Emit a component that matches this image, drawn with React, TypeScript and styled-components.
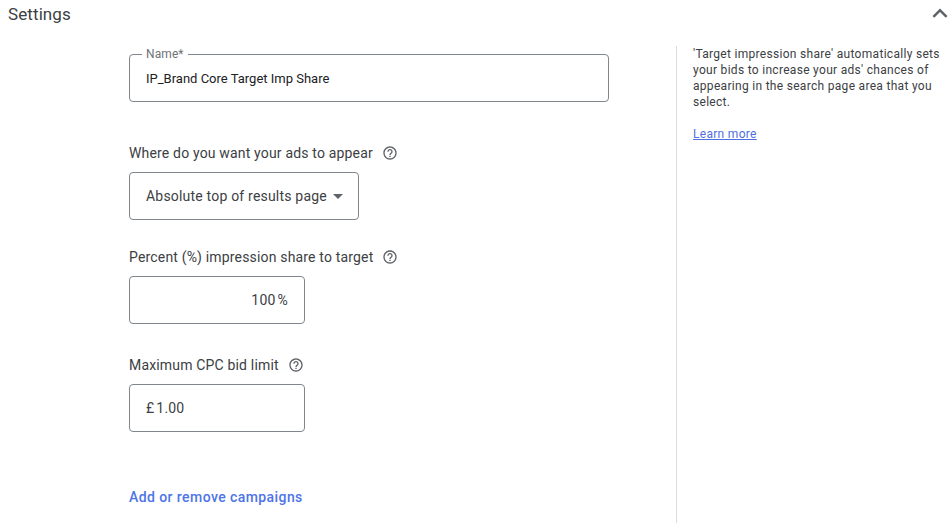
import styled, { createGlobalStyle } from 'styled-components';

const GlobalStyle = createGlobalStyle`
  html, body {
    margin: 0;
    padding: 0;
    background: #fff;
    font-family: Roboto, "Liberation Sans", sans-serif;
  }
`;

const Page = styled.div`
  width: 952px;
  height: 523px;
  overflow: hidden;
  display: flex;
  flex-direction: column;
  color: #3c4043;
`;

const Header = styled.div`
  height: 28px;
  display: flex;
  align-items: center;
  justify-content: space-between;
  padding: 0 2px 0 8px;
  flex-shrink: 0;
`;

const Title = styled.div`
  font-size: 17px;
  letter-spacing: 0.1px;
  color: #3c4043;
`;

const Body = styled.div`
  flex: 1;
  display: flex;
  padding-top: 18px;
`;

const FormColumn = styled.div`
  width: 547px;
  margin-left: 129px;
  flex-shrink: 0;
  display: flex;
  flex-direction: column;
`;

const Side = styled.div`
  flex: 1;
  border-left: 1px solid #dadce0;
  padding-left: 16px;
  padding-right: 8px;
  font-size: 12px;
  line-height: 16px;
  letter-spacing: 0.3px;
  color: #3c4043;
`;

const SideLink = styled.a`
  display: inline-block;
  margin-top: 16px;
  color: #4f6fe0;
  text-decoration: underline;
`;

const NameField = styled.fieldset`
  width: 480px;
  height: 55px;
  margin: 1px 0 0;
  padding: 0 16px;
  box-sizing: border-box;
  border: 1px solid #80868b;
  border-radius: 4px;
`;

const NameLegend = styled.legend`
  margin-left: -4px;
  padding: 0 4px;
  font-size: 12px;
  line-height: 14px;
  letter-spacing: 0.1px;
  color: #6f7378;
`;

const NameValue = styled.div`
  font-size: 13px;
  line-height: 16px;
  margin-top: 10px;
  color: #202124;
`;

const LabelRow = styled.div<{ $top: number }>`
  margin-top: ${(p) => p.$top}px;
  height: 20px;
  display: flex;
  align-items: center;
  gap: 9px;
  font-size: 14px;
  letter-spacing: 0.17px;
  color: #3c4043;
`;

const Box = styled.div<{ $width: number; $end?: boolean }>`
  width: ${(p) => p.$width}px;
  height: 48px;
  margin-top: 9px;
  padding: 0 16px;
  box-sizing: border-box;
  border: 1px solid #80868b;
  border-radius: 4px;
  display: flex;
  align-items: center;
  justify-content: ${(p) => (p.$end ? 'flex-end' : 'flex-start')};
  font-size: 14px;
  letter-spacing: 0.2px;
  white-space: nowrap;
  color: #3c4043;
`;

const Unit = styled.span<{ $lead?: boolean }>`
  margin: ${(p) => (p.$lead ? '0 2px 0 0' : '0 0 0 2px')};
`;

const Caret = styled.span`
  flex-shrink: 0;
  width: 0;
  height: 0;
  margin-left: 6px;
  border-left: 5px solid transparent;
  border-right: 5px solid transparent;
  border-top: 5px solid #5f6368;
`;

const AddLink = styled.a`
  margin-top: 55px;
  font-size: 14px;
  line-height: 20px;
  font-weight: 500;
  letter-spacing: 0.42px;
  color: #4d74e8;
`;

const Chevron = styled.svg`
  margin-bottom: 2px;
`;

const HelpIcon = () => (
  <svg width="16" height="16" viewBox="0 0 24 24" fill="#5f6368">
    <path d="M11 18h2v-2h-2v2zm1-16C6.48 2 2 6.48 2 12s4.48 10 10 10 10-4.48 10-10S17.52 2 12 2zm0 18c-4.41 0-8-3.59-8-8s3.59-8 8-8 8 3.59 8 8-3.59 8-8 8zm0-14c-2.21 0-4 1.79-4 4h2c0-1.1.9-2 2-2s2 .9 2 2c0 2-3 1.75-3 5h2c0-2.25 3-2.5 3-5 0-2.21-1.79-4-4-4z" />
  </svg>
);

const ChevronUp = () => (
  <Chevron width="20" height="15" viewBox="4 6 16 12" fill="#5f6368">
    <path d="M7.41 15.41 12 10.83l4.59 4.58L18 14l-6-6-6 6z" />
  </Chevron>
);

export default function App() {
  return (
    <Page>
      <GlobalStyle />
      <Header>
        <Title>Settings</Title>
        <ChevronUp />
      </Header>
      <Body>
        <FormColumn>
          <NameField>
            <NameLegend>Name*</NameLegend>
            <NameValue>IP_Brand Core Target Imp Share</NameValue>
          </NameField>
          <LabelRow $top={41}>
            Where do you want your ads to appear <HelpIcon />
          </LabelRow>
          <Box $width={230}>
            Absolute top of results page
            <Caret />
          </Box>
          <LabelRow $top={27}>
            Percent (%) impression share to target <HelpIcon />
          </LabelRow>
          <Box $width={176} $end>
            100
            <Unit>%</Unit>
          </Box>
          <LabelRow $top={31}>
            Maximum CPC bid limit <HelpIcon />
          </LabelRow>
          <Box $width={176}>
            <Unit $lead>£</Unit>1.00
          </Box>
          <AddLink>Add or remove campaigns</AddLink>
        </FormColumn>
        <Side>
          'Target impression share' automatically sets your bids to increase your ads' chances of appearing in the
          search page area that you select.
          <br />
          <SideLink>Learn more</SideLink>
        </Side>
      </Body>
    </Page>
  );
}
